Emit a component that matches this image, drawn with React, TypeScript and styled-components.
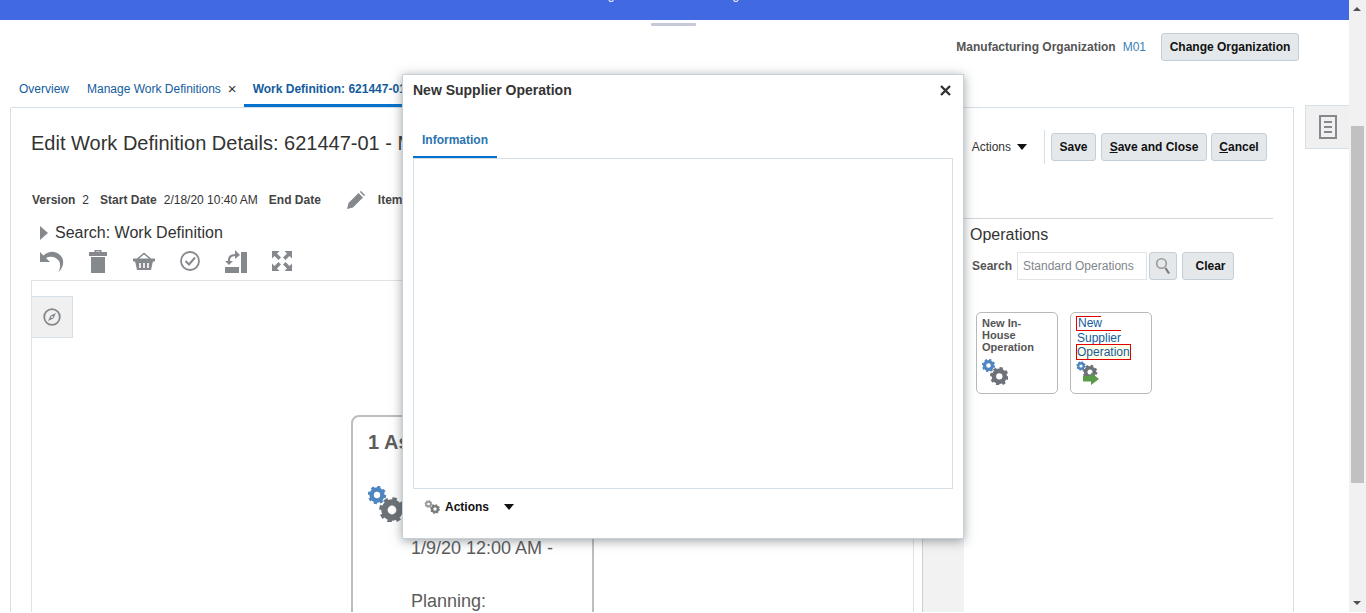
import React from 'react'
import styled, { createGlobalStyle } from 'styled-components'

const Global = createGlobalStyle`
  html, body {
    margin: 0;
    height: 613px;
    overflow: hidden;
    background: #fff;
  }

  body {
    font-family: "Liberation Sans", Arial, sans-serif;
    font-size: 12px;
    color: #333;
  }
`

const colors = {
  link: '#145c9e',
  blue: '#0572ce',
  border: '#d6dfe6',
  icon: '#85898d',
  button: '#e4e8ea',
  buttonBorder: '#c4ced7'
}

const Page = styled.div`
  position: relative;
  display: flex;
  width: 1366px;
  height: 613px;
  overflow: hidden;
`

const Main = styled.div`
  display: flex;
  flex-direction: column;
  width: 1349px;
  height: 612px;
`

const Banner = styled.div`
  flex: 0 0 20px;
  display: flex;
  justify-content: center;
  gap: 118px;
  height: 20px;
  padding-right: 2px;
  overflow: hidden;
  background: #4169e1;
`

const BannerText = styled.span`
  margin-top: -12px;
  font-size: 12px;
  line-height: 14px;
  color: #fff;
`

const Handle = styled.div`
  flex: 0 0 3px;
  width: 45px;
  margin: 3px 0 0 651px;
  border-radius: 1px;
  background: #c6cad6;
`

const OrgRow = styled.div`
  flex: 0 0 28px;
  display: flex;
  align-items: center;
  justify-content: flex-end;
  margin: 7px 50px 0 0;
`

const OrgLabel = styled.span`
  font-weight: bold;
  color: #555;
`

const OrgValue = styled.span`
  margin: 0 15px 0 7px;
  color: #3a7fb8;
`

const Button = styled.button`
  display: inline-flex;
  align-items: center;
  justify-content: center;
  box-sizing: border-box;
  height: 28px;
  width: ${(p) => p.$w}px;
  padding: 0;
  border: 1px solid ${colors.buttonBorder};
  border-radius: 3px;
  background: ${colors.button};
  font: bold 12px "Liberation Sans", Arial, sans-serif;
  color: #111;

  u {
    text-decoration: underline;
  }
`

const CancelButton = styled(Button)`
  margin-left: -1px;
`

const Tabs = styled.div`
  flex: 0 0 32px;
  display: flex;
  margin-top: 14px;
  padding-left: 19px;
`

const Tab = styled.div`
  display: flex;
  align-items: center;
  height: 32px;
  box-sizing: border-box;
  padding-bottom: 4px;
  white-space: nowrap;
  color: ${colors.link};
  margin-right: ${(p) => p.$gap || 0}px;
`

const ActiveTab = styled(Tab)`
  width: 250px;
  padding-left: 9px;
  border-bottom: 3px solid ${colors.blue};
  padding-bottom: 1px;
  font-weight: bold;
`

const TabClose = styled.span`
  margin-left: 7px;
  font-size: 15px;
  line-height: 12px;
  color: #333;
`

const Content = styled.div`
  flex: 1;
  display: flex;
  min-height: 0;
  padding-left: 10px;
`

const Panel = styled.div`
  display: flex;
  box-sizing: border-box;
  width: 1284px;
  border: 1px solid ${colors.border};
  border-bottom: 0;
  border-radius: 2px 2px 0 0;
`

const LeftPane = styled.div`
  flex: 0 0 953px;
  display: flex;
  flex-direction: column;
  box-sizing: border-box;
  min-width: 0;
  padding: 23px 0 0 20px;
`

const Title = styled.h1`
  margin: 0;
  font-size: 20px;
  font-weight: normal;
  line-height: 24px;
  white-space: nowrap;
  color: #333;
`

const InfoRow = styled.div`
  display: flex;
  align-items: center;
  height: 20px;
  margin: 35px 0 0 1px;
  white-space: nowrap;
`

const InfoLabel = styled.b`
  color: #444;
  margin-right: 7px;
`

const InfoValue = styled.span`
  margin-right: ${(p) => p.$gap}px;
`

const SearchRow = styled.div`
  display: flex;
  align-items: center;
  gap: 7px;
  height: 20px;
  margin: 13px 0 0 9px;
  font-size: 16px;
`

const Caret = styled.span`
  width: 0;
  height: 0;
  border-style: solid;
  ${(p) =>
    p.$right
      ? `border-width: 7px 0 7px 8px; border-color: transparent transparent transparent ${colors.icon};`
      : 'border-width: 6px 5px 0 5px; border-color: #111 transparent transparent transparent;'}
`

const Toolbar = styled.div`
  display: flex;
  height: 24px;
  margin: 6px 0 0 -2px;
`

const ToolCell = styled.span`
  display: flex;
  align-items: center;
  justify-content: center;
  width: 46px;
  height: 24px;
`

const Workspace = styled.div`
  flex: 1;
  display: flex;
  min-height: 0;
  margin-top: 7px;
`

const Canvas = styled.div`
  position: relative;
  flex: 0 0 883px;
  box-sizing: border-box;
  overflow: hidden;
  border: 1px solid #dfe3e6;
  border-bottom: 0;
`

const Strip = styled.div`
  flex: 0 0 42px;
  box-sizing: border-box;
  margin-left: 8px;
  border-left: 1px solid #cfcfcf;
  background: #f2f2f2;
`

const PaletteTab = styled.div`
  position: absolute;
  left: 0;
  top: 15px;
  display: flex;
  align-items: center;
  justify-content: center;
  box-sizing: border-box;
  width: 41px;
  height: 42px;
  border: 1px solid ${colors.border};
  border-left: 0;
  background: #f0f0f0;
`

const NodeCard = styled.div`
  position: absolute;
  left: 319px;
  top: 134px;
  box-sizing: border-box;
  width: 243px;
  height: 320px;
  padding: 13px 15px;
  border: 2px solid #bdbdbd;
  border-radius: 8px;
  color: #5c5c5c;
`

const NodeTitle = styled.div`
  font-size: 20px;
  font-weight: bold;
  line-height: 24px;
  white-space: nowrap;
`

const NodeIcon = styled.div`
  height: 36px;
  margin-top: 32px;
  line-height: 0;
`

const NodeText = styled.div`
  margin: 13px 0 0 43px;
  font-size: 18px;
  line-height: 26.5px;
  white-space: nowrap;
`

const RightPane = styled.div`
  flex: 1;
  display: flex;
  flex-direction: column;
  min-width: 0;
`

const ActionBar = styled.div`
  display: flex;
  align-items: center;
  justify-content: flex-end;
  gap: 5px;
  height: 34px;
  margin: 22px 26px 0 0;
`

const ActionsMenu = styled.div`
  display: flex;
  align-items: center;
  gap: 6px;
  height: 34px;
  margin-right: 1px;
  padding-right: 17px;
  border-right: 1px solid ${colors.border};
`

const Operations = styled.section`
  margin: 54px 20px 0 0;
  border-top: 1px solid #d3d6d9;
`

const OperationsTitle = styled.h2`
  margin: 6px 0 0 6px;
  font-size: 16px;
  font-weight: normal;
  line-height: 20px;
  color: #333;
`

const OpsSearch = styled.div`
  display: flex;
  align-items: center;
  height: 28px;
  margin: 7px 0 0 8px;
`

const OpsLabel = styled.b`
  width: 45px;
  color: #555;
`

const SearchInput = styled.div`
  display: flex;
  align-items: center;
  box-sizing: border-box;
  width: 130px;
  height: 28px;
  padding-left: 5px;
  border: 1px solid #e0e4e7;
  color: #80868b;
  white-space: nowrap;
`

const IconButton = styled(Button)`
  margin-left: 2px;
`

const ClearButton = styled(Button)`
  margin-left: 5px;
  padding: 0 0 1px 5px;
`

const OpsCards = styled.div`
  display: flex;
  gap: 12px;
  margin: 32px 0 0 12px;
`

const OpCard = styled.div`
  display: flex;
  flex-direction: column;
  box-sizing: border-box;
  width: 82px;
  height: 82px;
  padding: ${(p) => p.$pad};
  border: 1px solid #b9b9b9;
  border-radius: 5px;
`

const OpName = styled.div`
  font-size: 11px;
  font-weight: bold;
  line-height: 12px;
  color: #555;
`

const OpLink = styled.div`
  position: relative;
  display: block;
  width: fit-content;
  box-sizing: border-box;
  height: ${(p) => p.$h}px;
  padding-left: 1px;
  font-size: 12px;
  line-height: 14px;
  color: ${colors.link};
`

const OpLinkNew = styled(OpLink)`
  width: 45px;
  border-left: 1px solid #e00000;
  border-bottom: 1px solid #e00000;

  &::before {
    content: '';
    position: absolute;
    left: -1px;
    top: 0;
    width: 25px;
    height: 1px;
    background: #e00000;
  }
`

const OpLinkBoxed = styled(OpLink)`
  padding: 0;
  border: 1px solid #e00000;
  background: #fdfde8;
`

const SideTab = styled.div`
  display: flex;
  align-items: center;
  justify-content: center;
  box-sizing: border-box;
  width: 44px;
  height: 44px;
  margin: -2px 0 0 11px;
  border: 1px solid ${colors.border};
  border-right: 0;
  background: #f0f0f0;
`

const Scrollbar = styled.div`
  position: relative;
  width: 17px;
  height: 612px;
  background: #f1f1f1;
`

const ScrollArrow = styled.span`
  position: absolute;
  left: 4px;
  ${(p) => (p.$down ? 'bottom: 7px;' : 'top: 7px;')}
  width: 0;
  height: 0;
  border-style: solid;
  border-width: ${(p) => (p.$down ? '4px 4px 0 4px' : '0 4px 4px 4px')};
  border-color: ${(p) =>
    p.$down
      ? '#505050 transparent transparent transparent'
      : 'transparent transparent #505050 transparent'};
`

const ScrollThumb = styled.div`
  position: absolute;
  left: 2px;
  top: 126px;
  width: 13px;
  height: 357px;
  background: #c1c1c1;
`

const Modal = styled.div`
  position: absolute;
  left: 402px;
  top: 74px;
  display: flex;
  flex-direction: column;
  box-sizing: border-box;
  width: 562px;
  height: 465px;
  padding: 0 10px;
  border: 1px solid #c8d0d6;
  background: #fff;
  box-shadow: 0 2px 10px rgba(60, 70, 80, 0.5);
`

const ModalHeader = styled.div`
  display: flex;
  align-items: center;
  justify-content: space-between;
  height: 28px;
  margin-top: 1px;
  padding-right: 2px;
`

const ModalTitle = styled.h3`
  margin: 0;
  font-size: 14px;
  font-weight: bold;
  color: #333;
`

const ModalTabs = styled.div`
  display: flex;
  margin-top: 25px;
`

const ModalTab = styled.div`
  box-sizing: border-box;
  width: 84px;
  height: 30px;
  padding: 3px 0 0 9px;
  border-bottom: 3px solid ${colors.blue};
  font-weight: bold;
  line-height: 16px;
  color: #2a74b0;
`

const ModalBody = styled.div`
  box-sizing: border-box;
  width: 540px;
  height: 331px;
  margin-top: -1px;
  border: 1px solid ${colors.border};
`

const ModalFooter = styled.div`
  display: flex;
  align-items: center;
  height: 36px;
  padding-left: 11px;
  font-weight: bold;
  color: #111;
`

const FooterLabel = styled.span`
  margin: 0 15px 0 5px;
`

const NodeIconSmall = styled.div`
  margin-top: 6px;
  line-height: 0;
`

const SupplierIconWrap = styled.div`
  margin-top: 1px;
  line-height: 0;
`

const Undo = () => (
  <svg width="24" height="24" viewBox="0 0 24 24" fill={colors.icon}>
    <path d="M0 3 V13 H10 L6 9 C10 6.5 16 7.5 19 12 C21 15.5 20 20 18.5 23 C23.5 18.5 25 11 20.5 6.5 C15.5 1.5 9 1.5 3.5 6.5 Z" />
  </svg>
)

const Trash = () => (
  <svg width="18" height="24" viewBox="0 0 18 24" fill={colors.icon}>
    <path d="M5.5 3 V1 H12.5 V3 H18 V7 H0 V3 Z M7 3 H11 V2.4 H7 Z" />
    <rect x="2" y="8" width="14" height="16" />
  </svg>
)

const Basket = () => (
  <svg width="22" height="18" viewBox="0 0 22 18" fill={colors.icon}>
    <path d="M4.5 7 L11 1.5 L17.5 7" fill="none" stroke={colors.icon} strokeWidth="1.6" />
    <rect x="0" y="6.5" width="22" height="3" />
    <path d="M2 9 H20 L18 18 H4 Z" />
    <path d="M7 11 V16 M11 11 V16 M15 11 V16" stroke="#fff" strokeWidth="1.6" />
  </svg>
)

const CheckCircle = () => (
  <svg width="20" height="20" viewBox="0 0 20 20" fill="none" stroke={colors.icon}>
    <circle cx="10" cy="10" r="9" strokeWidth="1.8" />
    <path d="M5.5 10 L9 13.5 L15 6.5" strokeWidth="2" />
  </svg>
)

const Resequence = () => (
  <svg width="22" height="24" viewBox="0 0 22 24" fill={colors.icon}>
    <rect x="16" y="3" width="6" height="21" />
    <rect x="0" y="18" width="14" height="6" />
    <path d="M4 14 V11 C4 7.5 7 6 11 6" fill="none" stroke={colors.icon} strokeWidth="2.2" />
    <path d="M10 1 L15 6 L10 10 Z M0 12 H8 L4 16 Z" />
  </svg>
)

const Expand = () => (
  <svg width="20" height="20" viewBox="0 0 20 20" fill={colors.icon}>
    <path d="M0 0 H7.5 L5 2.5 L9 6.5 L6.5 9 L2.5 5 L0 7.5 Z" />
    <path d="M20 0 V7.5 L17.5 5 L13.5 9 L11 6.5 L15 2.5 L12.5 0 Z" />
    <path d="M0 20 V12.5 L2.5 15 L6.5 11 L9 13.5 L5 17.5 L7.5 20 Z" />
    <path d="M20 20 H12.5 L15 17.5 L11 13.5 L13.5 11 L17.5 15 L20 12.5 Z" />
  </svg>
)

const Pencil = () => (
  <svg width="18" height="18" viewBox="0 0 18 18" fill={colors.icon}>
    <path d="M0 18 L1.5 12 L11.5 2 L16 6.5 L6 16.5 Z M12.7 0.8 L14 0 L18 4 L17.2 5.3 Z" />
  </svg>
)

const Compass = () => (
  <svg width="18" height="18" viewBox="0 0 18 18" fill="none" stroke={colors.icon}>
    <circle cx="9" cy="9" r="7.8" strokeWidth="1.8" />
    <path d="M5 13 L7.6 7.6 L13 5 L10.4 10.4 Z" fill={colors.icon} stroke="none" />
    <circle cx="9" cy="9" r="1" fill="#f0f0f0" stroke="none" />
  </svg>
)

const Magnifier = () => (
  <svg width="16" height="18" viewBox="0 0 16 18" fill="none">
    <circle cx="6.5" cy="6.5" r="4.8" stroke="#9a9a9a" strokeWidth="1.6" />
    <path d="M10.5 11 L14 16.5" stroke="#7a7a7a" strokeWidth="2.2" />
  </svg>
)

const DocIcon = () => (
  <svg width="18" height="24" viewBox="0 0 18 24" fill="none" stroke="#85898d">
    <rect x="1" y="1" width="16" height="22" strokeWidth="2" />
    <path d="M5 7 H13 M5 12 H13 M5 17 H13" strokeWidth="2" />
  </svg>
)

const CloseX = () => (
  <svg width="11" height="11" viewBox="0 0 11 11" stroke="#333" strokeWidth="2.4">
    <path d="M1 1 L10 10 M10 1 L1 10" />
  </svg>
)

const Gear = ({ cx, cy, r, color }) => {
  const teeth = 2 * Math.PI * r
  return (
    <g fill="none">
      <circle cx={cx} cy={cy} r={r} stroke={color} strokeWidth={r * 0.45} strokeDasharray={`${teeth / 16} ${teeth / 16}`} />
      <circle cx={cx} cy={cy} r={r * 0.72} stroke={color} strokeWidth={r * 0.6} />
      <circle cx={cx} cy={cy} r={r * 0.22} fill="#fff" opacity="0.75" />
    </g>
  )
}

const Gears = ({ size, small, big }) => (
  <svg width={size} height={size} viewBox="0 0 36 36">
    <Gear cx={9} cy={9} r={7.5} color={small} />
    <Gear cx={24} cy={24} r={10.5} color={big} />
  </svg>
)

const SupplierGears = () => (
  <svg width="24" height="26" viewBox="0 0 24 26">
    <Gear cx={5} cy={5} r={3.8} color="#4f86c0" />
    <Gear cx={14} cy={11} r={6} color="#6c7278" />
    <path d="M7 15 H15 V11.5 L23 18 L15 24 V20.5 H7 Z" fill="#5a9a4a" />
  </svg>
)

export default function App() {
  return (
    <Page>
      <Global />
      <Main>
        <Banner>
          <BannerText>g</BannerText>
          <BannerText>g</BannerText>
        </Banner>
        <Handle />
        <OrgRow>
          <OrgLabel>Manufacturing Organization</OrgLabel>
          <OrgValue>M01</OrgValue>
          <Button $w={138}>Change Organization</Button>
        </OrgRow>
        <Tabs>
          <Tab $gap={18}>Overview</Tab>
          <Tab $gap={7}>
            Manage Work Definitions<TabClose>×</TabClose>
          </Tab>
          <ActiveTab>Work Definition: 621447-01</ActiveTab>
        </Tabs>
        <Content>
          <Panel>
            <LeftPane>
              <Title>Edit Work Definition Details: 621447-01 - Make Item</Title>
              <InfoRow>
                <InfoLabel>Version</InfoLabel>
                <InfoValue $gap={11}>2</InfoValue>
                <InfoLabel>Start Date</InfoLabel>
                <InfoValue $gap={11}>2/18/20 10:40 AM</InfoValue>
                <InfoLabel>End Date</InfoLabel>
                <InfoValue $gap={19} />
                <Pencil />
                <InfoValue $gap={13} />
                <InfoLabel>Item</InfoLabel>
              </InfoRow>
              <SearchRow>
                <Caret $right />
                Search: Work Definition
              </SearchRow>
              <Toolbar>
                <ToolCell><Undo /></ToolCell>
                <ToolCell><Trash /></ToolCell>
                <ToolCell><Basket /></ToolCell>
                <ToolCell><CheckCircle /></ToolCell>
                <ToolCell><Resequence /></ToolCell>
                <ToolCell><Expand /></ToolCell>
              </Toolbar>
              <Workspace>
                <Canvas>
                  <PaletteTab><Compass /></PaletteTab>
                  <NodeCard>
                    <NodeTitle>1 Assembly</NodeTitle>
                    <NodeIcon>
                      <Gears size={36} small="#4f86c0" big="#6c7278" />
                    </NodeIcon>
                    <NodeText>
                      1/9/20 12:00 AM -
                      <br />
                      <br />
                      Planning:
                    </NodeText>
                  </NodeCard>
                </Canvas>
                <Strip />
              </Workspace>
            </LeftPane>
            <RightPane>
              <ActionBar>
                <ActionsMenu>
                  Actions <Caret />
                </ActionsMenu>
                <Button $w={45}>Save</Button>
                <Button $w={106}><u>S</u>ave and Close</Button>
                <CancelButton $w={56}><u>C</u>ancel</CancelButton>
              </ActionBar>
              <Operations>
                <OperationsTitle>Operations</OperationsTitle>
                <OpsSearch>
                  <OpsLabel>Search</OpsLabel>
                  <SearchInput>Standard Operations</SearchInput>
                  <IconButton $w={28}><Magnifier /></IconButton>
                  <ClearButton $w={52}>Clear</ClearButton>
                </OpsSearch>
                <OpsCards>
                  <OpCard $pad="4px 5px">
                    <OpName>New In-<br />House<br />Operation</OpName>
                    <NodeIconSmall><Gears size={26} small="#4f86c0" big="#6c7278" /></NodeIconSmall>
                  </OpCard>
                  <OpCard $pad="3px 5px">
                    <OpLinkNew $h={15}>New</OpLinkNew>
                    <OpLink $h={13}>Supplier</OpLink>
                    <OpLinkBoxed $h={16}>Operation</OpLinkBoxed>
                    <SupplierIconWrap><SupplierGears /></SupplierIconWrap>
                  </OpCard>
                </OpsCards>
              </Operations>
            </RightPane>
          </Panel>
          <SideTab><DocIcon /></SideTab>
        </Content>
      </Main>
      <Scrollbar>
        <ScrollArrow />
        <ScrollThumb />
        <ScrollArrow $down />
      </Scrollbar>
      <Modal>
        <ModalHeader>
          <ModalTitle>New Supplier Operation</ModalTitle>
          <CloseX />
        </ModalHeader>
        <ModalTabs>
          <ModalTab>Information</ModalTab>
        </ModalTabs>
        <ModalBody />
        <ModalFooter>
          <svg width="16" height="16" viewBox="0 0 16 16">
            <Gear cx={4.5} cy={5} r={3.2} color="#9a9a9a" />
            <Gear cx={11} cy={10} r={4} color="#7a7a7a" />
          </svg>
          <FooterLabel>Actions</FooterLabel>
          <Caret />
        </ModalFooter>
      </Modal>
    </Page>
  )
}
